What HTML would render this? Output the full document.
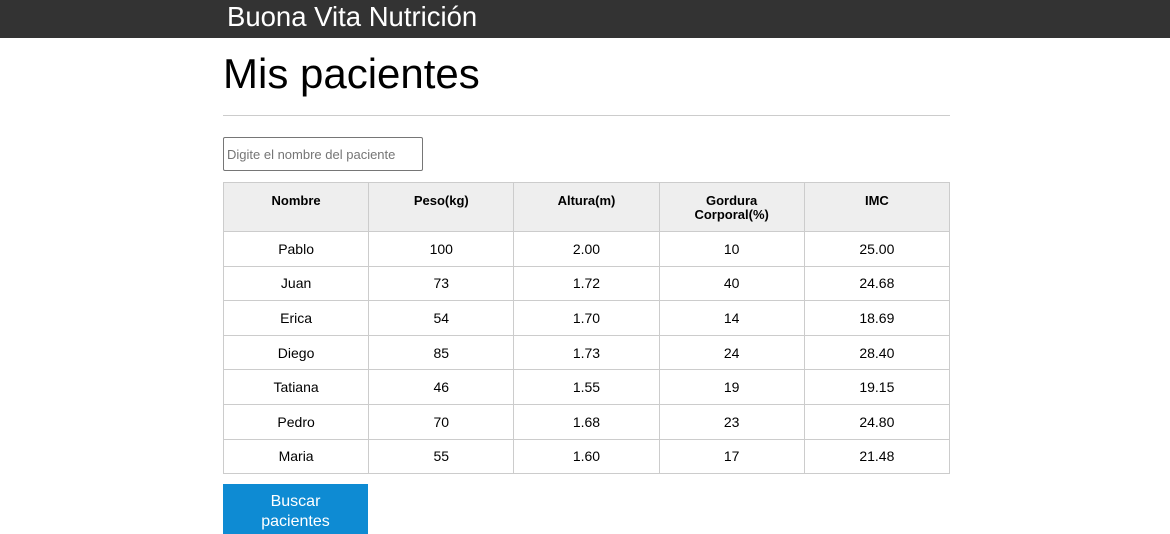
<!DOCTYPE html>
<html><head><meta charset="utf-8"><style>
body{margin:0;font-family:"Liberation Sans",Arial,sans-serif;background:#fff;width:1170px;height:530px;overflow:hidden;position:relative}
.bar{position:absolute;left:0;top:0;width:1170px;height:38px;background:#333}
.bar span{position:absolute;left:227px;top:1px;color:#fff;font-size:27.5px;line-height:32px}
h1{position:absolute;left:223px;top:51px;margin:0;font-weight:normal;font-size:42px;line-height:46px;color:#000}
.hr{position:absolute;left:223px;top:115px;width:727px;height:1px;background:#ccc}
.inp{position:absolute;left:223px;top:137px;width:200px;height:34px;border:1px solid #767676;border-radius:2px;box-sizing:border-box}
.inp span{position:absolute;left:3px;top:9px;font-size:13px;color:#757575}
table{position:absolute;left:223px;top:182px;border-collapse:collapse;table-layout:fixed;width:727px}
td,th{border:1px solid #ccc;text-align:center;font-size:14px;padding:0;color:#000}
th{background:#eee;height:49px;vertical-align:top;padding-top:11px;box-sizing:border-box;font-size:13px;line-height:14px}
td{height:33.6px}
.btn{position:absolute;left:223px;top:484px;width:145px;height:50px;background:#0e8bd3;color:#fff;font-size:16px;text-align:center;line-height:20px;padding-top:8px;box-sizing:border-box}
</style></head><body>
<div class="bar"><span>Buona Vita Nutrición</span></div>
<h1>Mis pacientes</h1>
<div class="hr"></div>
<div class="inp"><span>Digite el nombre del paciente</span></div>
<table>
<tr><th>Nombre</th><th>Peso(kg)</th><th>Altura(m)</th><th>Gordura<br>Corporal(%)</th><th>IMC</th></tr>
<tr><td>Pablo</td><td>100</td><td>2.00</td><td>10</td><td>25.00</td></tr>
<tr><td>Juan</td><td>73</td><td>1.72</td><td>40</td><td>24.68</td></tr>
<tr><td>Erica</td><td>54</td><td>1.70</td><td>14</td><td>18.69</td></tr>
<tr><td>Diego</td><td>85</td><td>1.73</td><td>24</td><td>28.40</td></tr>
<tr><td>Tatiana</td><td>46</td><td>1.55</td><td>19</td><td>19.15</td></tr>
<tr><td>Pedro</td><td>70</td><td>1.68</td><td>23</td><td>24.80</td></tr>
<tr><td>Maria</td><td>55</td><td>1.60</td><td>17</td><td>21.48</td></tr>
</table>
<div class="btn">Buscar<br>pacientes</div>
</body></html>
